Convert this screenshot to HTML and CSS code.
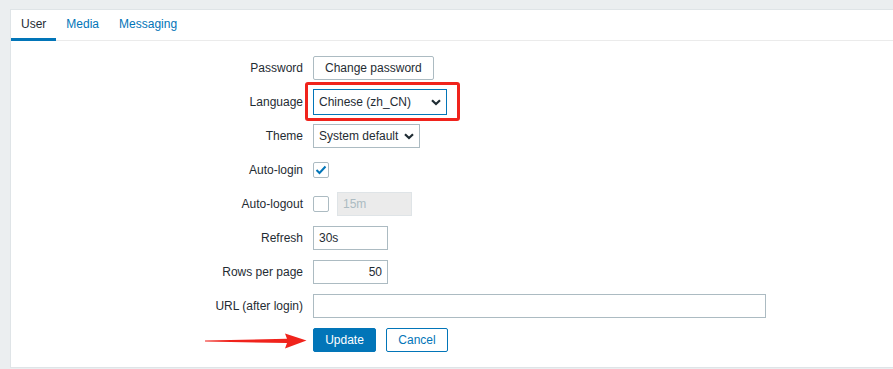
FILE: index.html
```html
<!DOCTYPE html>
<html lang="en">
<head>
    <meta charset="UTF-8">
    <meta name="viewport" content="width=device-width, initial-scale=1.0">
    <title>User profile</title>
    <link rel="stylesheet" href="styles.css">
</head>
<body>
    <div class="panel">
        <ul class="tabs">
            <li class="tab active">User</li>
            <li class="tab">Media</li>
            <li class="tab">Messaging</li>
        </ul>

        <div class="form">
            <label class="label">Password</label>
            <div class="field"><button class="btn-alt">Change password</button></div>

            <label class="label">Language</label>
            <div class="field">
                <div class="highlight-wrap">
                    <div class="select focused lang">
                        <span>Chinese (zh_CN)</span>
                        <svg width="10" height="7" viewBox="0 0 10 7"><path d="M1 1.2 L5 5 L9 1.2" fill="none" stroke="#1f2c33" stroke-width="2.2"/></svg>
                    </div>
                    <div class="highlight"></div>
                </div>
            </div>

            <label class="label">Theme</label>
            <div class="field">
                <div class="select theme">
                    <span>System default</span>
                    <svg width="10" height="7" viewBox="0 0 10 7"><path d="M1 1.2 L5 5 L9 1.2" fill="none" stroke="#1f2c33" stroke-width="2.2"/></svg>
                </div>
            </div>

            <label class="label">Auto-login</label>
            <div class="field">
                <span class="checkbox">
                    <svg width="12" height="10" viewBox="0 0 12 10"><path d="M1.5 5 L4.5 8 L10.5 1.5" fill="none" stroke="#0275b8" stroke-width="2"/></svg>
                </span>
            </div>

            <label class="label">Auto-logout</label>
            <div class="field">
                <span class="checkbox"></span>
                <input class="input disabled short" value="15m" disabled>
            </div>

            <label class="label">Refresh</label>
            <div class="field"><input class="input short" value="30s"></div>

            <label class="label">Rows per page</label>
            <div class="field"><input class="input short num" value="50"></div>

            <label class="label">URL (after login)</label>
            <div class="field"><input class="input wide" value=""></div>

            <div class="label arrow-cell">
                <svg class="arrow" width="102" height="16" viewBox="0 0 102 16"><path d="M0 7.6 L82 5.8 L80 0.5 L101.5 7.5 L80 15.5 L82 10 L0 8.6 Z" fill="#f0231c"/></svg>
            </div>
            <div class="field buttons">
                <button class="btn-main">Update</button>
                <button class="btn-outline">Cancel</button>
            </div>
        </div>
    </div>
</body>
</html>
```

FILE: styles.css
```css
body {
    margin: 0;
    background: #ebeef0;
    font-family: "Liberation Sans", Arial, sans-serif;
    font-size: 12px;
    color: #1f2c33;
}
.panel {
    margin: 9px 0 0 10px;
    background: #fff;
    border: 1px solid #dfe4e7;
    border-right: none;
    padding-bottom: 15px;
}
.tabs {
    list-style: none;
    margin: 0;
    padding: 0;
    display: flex;
    height: 30px;
    border-bottom: 1px solid #ebebeb;
}
.tab {
    padding: 0 10px;
    line-height: 28px;
    color: #0275b8;
    border-bottom: 3px solid transparent;
    margin-bottom: -1px;
}
.tab.active {
    color: #1f2c33;
    border-bottom-color: #0275b8;
}
.form {
    display: grid;
    grid-template-columns: 292px 1fr;
    column-gap: 10px;
    row-gap: 10px;
    padding-top: 15px;
}
.label {
    text-align: right;
    line-height: 24px;
    height: 24px;
}
.field {
    display: flex;
    align-items: center;
    gap: 8px;
    height: 24px;
}
.btn-alt {
    height: 24px;
    padding: 0 11px;
    background: #fff;
    border: 1px solid #acbbc2;
    border-radius: 2px;
    font: inherit;
    color: #1f2c33;
}
.highlight-wrap {
    position: relative;
}
.highlight {
    position: absolute;
    left: -8px;
    top: -7px;
    right: -13px;
    bottom: -6px;
    border: 3px solid #f0231c;
    border-radius: 3px;
}
.select {
    box-sizing: border-box;
    height: 24px;
    display: flex;
    align-items: center;
    justify-content: space-between;
    padding: 0 5px 0 5px;
    border: 1px solid #acbbc2;
    background: #fff;
}
.select.focused {
    border-color: #0275b8;
    height: 26px;
}
.select.lang {
    width: 134px;
}
.select.theme {
    width: 107px;
}
.checkbox {
    box-sizing: border-box;
    width: 16px;
    height: 16px;
    border: 1px solid #acbbc2;
    border-radius: 2px;
    display: flex;
    align-items: center;
    justify-content: center;
}
.input {
    box-sizing: border-box;
    height: 24px;
    border: 1px solid #acbbc2;
    padding: 0 5px;
    font: inherit;
    color: #1f2c33;
    background: #fff;
}
.input.short {
    width: 75px;
}
.input.num {
    text-align: right;
}
.input.wide {
    width: 453px;
}
.input.disabled {
    background: #ebebeb;
    border-color: #dfe4e7;
    color: #acbbc2;
}
.arrow-cell {
    display: flex;
    justify-content: flex-end;
    align-items: center;
}
.arrow {
    margin-right: -4px;
    margin-top: 2px;
}
.buttons {
    gap: 10px;
}
.btn-main {
    height: 24px;
    width: 63px;
    background: #0275b8;
    color: #fff;
    border: 1px solid #0275b8;
    border-radius: 2px;
    font: inherit;
}
.btn-outline {
    height: 24px;
    width: 62px;
    background: #fff;
    color: #0275b8;
    border: 1px solid #0275b8;
    border-radius: 2px;
    font: inherit;
}
```
